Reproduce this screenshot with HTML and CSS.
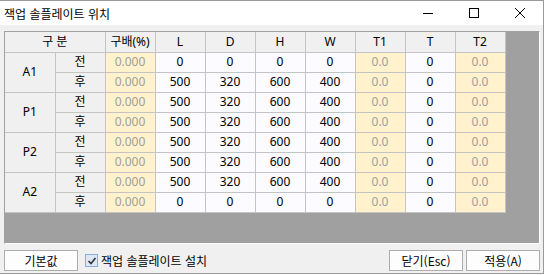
FILE: index.html
```html
<!DOCTYPE html>
<html lang="ko">
<head>
    <meta charset="UTF-8">
    <title>잭업 솔플레이트 위치</title>
    <link rel="stylesheet" href="styles.css">
</head>
<body>
    <div class="window">
        <div class="titlebar">
            <span class="title">잭업 솔플레이트 위치</span>
            <div class="controls">
                <span class="ctl">
                    <svg width="10" height="10" viewBox="0 0 10 10"><path d="M0 5.5H10" stroke="#000" stroke-width="1"/></svg>
                </span>
                <span class="ctl">
                    <svg width="10" height="10" viewBox="0 0 10 10"><rect x="0.5" y="0.5" width="9" height="9" fill="none" stroke="#000" stroke-width="1"/></svg>
                </span>
                <span class="ctl">
                    <svg width="10" height="10" viewBox="0 0 10 10"><path d="M0 0L10 10M10 0L0 10" stroke="#000" stroke-width="1"/></svg>
                </span>
            </div>
        </div>

        <div class="content">
            <div class="grid-box">
                <table class="grid">
                    <colgroup>
                        <col><col><col><col><col><col><col><col><col><col>
                    </colgroup>
                    <tr>
                        <th colspan="2">구 분</th>
                        <th>구배(%)</th>
                        <th>L</th>
                        <th>D</th>
                        <th>H</th>
                        <th>W</th>
                        <th>T1</th>
                        <th>T</th>
                        <th>T2</th>
                    </tr>
                    <!-- A1 -->
                    <tr>
                        <th rowspan="2">A1</th>
                        <th>전</th>
                        <td class="ro">0.000</td><td>0</td><td>0</td><td>0</td><td>0</td>
                        <td class="ro">0.0</td><td>0</td><td class="ro">0.0</td>
                    </tr>
                    <tr>
                        <th>후</th>
                        <td class="ro">0.000</td><td>500</td><td>320</td><td>600</td><td>400</td>
                        <td class="ro">0.0</td><td>0</td><td class="ro">0.0</td>
                    </tr>
                    <!-- P1 -->
                    <tr>
                        <th rowspan="2">P1</th>
                        <th>전</th>
                        <td class="ro">0.000</td><td>500</td><td>320</td><td>600</td><td>400</td>
                        <td class="ro">0.0</td><td>0</td><td class="ro">0.0</td>
                    </tr>
                    <tr>
                        <th>후</th>
                        <td class="ro">0.000</td><td>500</td><td>320</td><td>600</td><td>400</td>
                        <td class="ro">0.0</td><td>0</td><td class="ro">0.0</td>
                    </tr>
                    <!-- P2 -->
                    <tr>
                        <th rowspan="2">P2</th>
                        <th>전</th>
                        <td class="ro">0.000</td><td>500</td><td>320</td><td>600</td><td>400</td>
                        <td class="ro">0.0</td><td>0</td><td class="ro">0.0</td>
                    </tr>
                    <tr>
                        <th>후</th>
                        <td class="ro">0.000</td><td>500</td><td>320</td><td>600</td><td>400</td>
                        <td class="ro">0.0</td><td>0</td><td class="ro">0.0</td>
                    </tr>
                    <!-- A2 -->
                    <tr>
                        <th rowspan="2">A2</th>
                        <th>전</th>
                        <td class="ro">0.000</td><td>500</td><td>320</td><td>600</td><td>400</td>
                        <td class="ro">0.0</td><td>0</td><td class="ro">0.0</td>
                    </tr>
                    <tr>
                        <th>후</th>
                        <td class="ro">0.000</td><td>0</td><td>0</td><td>0</td><td>0</td>
                        <td class="ro">0.0</td><td>0</td><td class="ro">0.0</td>
                    </tr>
                </table>
            </div>

            <div class="footer">
                <button class="btn">기본값</button>
                <label class="check">
                    <span class="box">
                        <svg width="10" height="10" viewBox="0 0 10 10"><path d="M1.5 5L4 7.5L8.5 2" fill="none" stroke="#333" stroke-width="1.6"/></svg>
                    </span>
                    잭업 솔플레이트 설치
                </label>
                <div class="spacer"></div>
                <button class="btn">닫기(Esc)</button>
                <button class="btn">적용(A)</button>
            </div>
        </div>
    </div>
</body>
</html>
```

FILE: styles.css
```css
* {
    margin: 0;
    padding: 0;
    box-sizing: border-box;
}

body {
    background-color: #ffffff;
    font-family: "Noto Sans", "Noto Sans CJK KR", sans-serif;
}

.window {
    width: 544px;
    height: 274px;
    background-color: #f0f0f0;
    border-top: 1px solid #9a9a9a;
    border-right: 1px solid #9a9a9a;
    border-bottom: 1px solid #9a9a9a;
}

.titlebar {
    height: 24px;
    background-color: #ffffff;
    display: flex;
    align-items: center;
    justify-content: space-between;
}

.title {
    padding-left: 4px;
    font-family: "Noto Sans CJK KR", sans-serif;
    font-size: 12px;
    color: #000;
}

.controls {
    display: flex;
    height: 100%;
}

.ctl {
    width: 46px;
    display: flex;
    align-items: center;
    justify-content: center;
}

.ctl svg {
    display: block;
}

.content {
    padding: 6px 3px 0 4px;
}

.grid-box {
    width: 536px;
    height: 213px;
    background-color: #a0a0a0;
    border-top: 1px solid #a0a0a0;
    border-left: 1px solid #a0a0a0;
    border-right: 1px solid #ffffff;
    border-bottom: 1px solid #ffffff;
}

.grid {
    border-collapse: collapse;
    table-layout: fixed;
    width: 500px;
    font-size: 12px;
}

.grid col {
    width: 50px;
}

.grid th,
.grid td {
    height: 20px;
    padding: 0;
    text-align: center;
    border-right: 1px solid #c4c4c4;
    border-bottom: 1px solid #c4c4c4;
    font-weight: normal;
    line-height: 18px;
    color: #000;
    white-space: nowrap;
}

.grid th {
    background-color: #f0f0f0;
}

.grid td {
    background-color: #fcfbff;
}

.grid td.ro {
    background-color: #fff2cc;
    color: #a0a0a0;
}

.footer {
    margin-top: 6px;
    display: flex;
    align-items: center;
    height: 21px;
}

.btn {
    width: 74px;
    height: 21px;
    background-color: #fdfdfd;
    border: 1px solid #adadad;
    font-family: "Noto Sans CJK KR", sans-serif;
    font-size: 12px;
    color: #000;
}

.btn + .btn {
    margin-left: 3px;
}

.check {
    display: flex;
    align-items: center;
    margin-left: 7px;
    font-family: "Noto Sans CJK KR", sans-serif;
    font-size: 12px;
    color: #000;
}

.box {
    width: 13px;
    height: 13px;
    margin-right: 3px;
    border: 1px solid #8aaedc;
    background-color: #dde8f6;
    display: flex;
    align-items: center;
    justify-content: center;
}

.spacer {
    flex: 1;
}
```
